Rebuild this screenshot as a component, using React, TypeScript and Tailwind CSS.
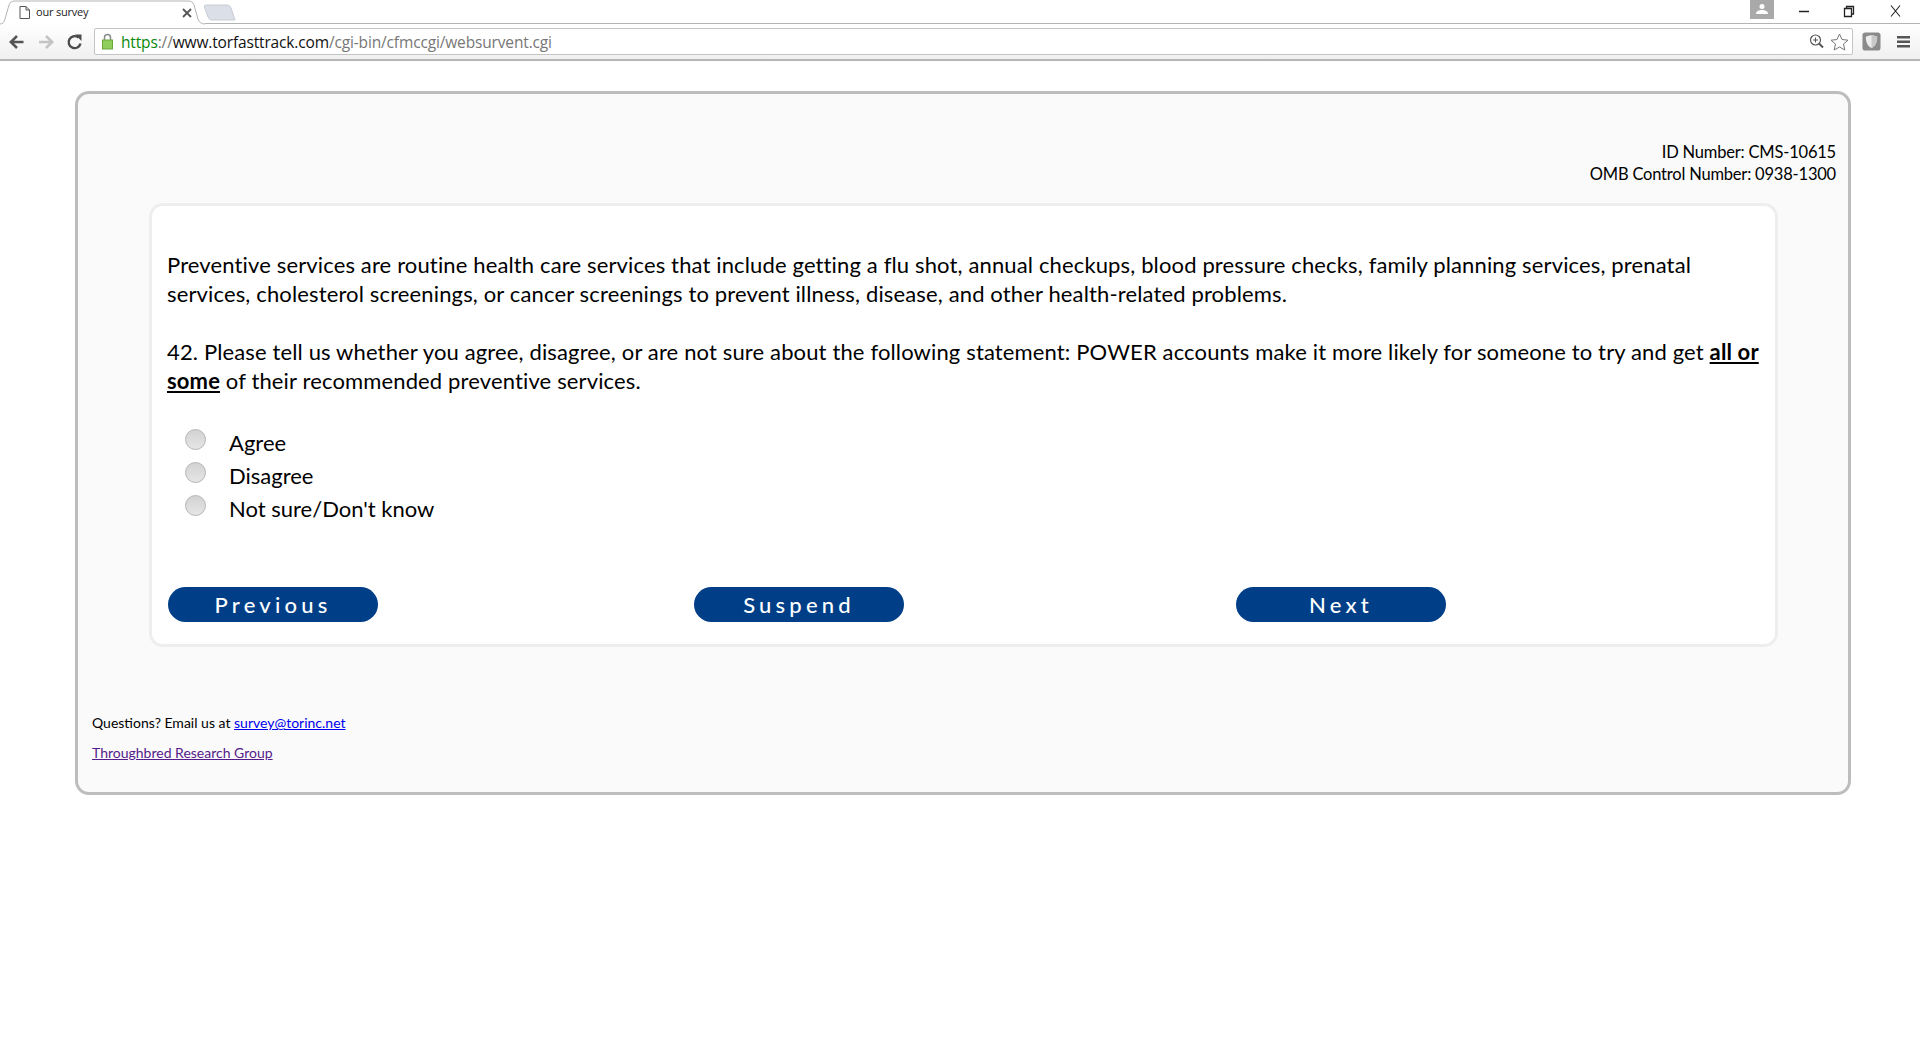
const bodyFont = "font-['Lato','Open_Sans',sans-serif]"

function TabShape() {
  return (
    <svg width="240" height="25" viewBox="0 0 240 25" className="absolute left-0 top-0" fill="none">
      <path d="M0 24 C3 24 4 22 5 19 L9 5 C10 2 12 1 15 1 L188 1 C191 1 193 2 194 5 L198 19 C199 22 201 24 205 24" fill="#ffffff" stroke="#b4b4b4" strokeWidth="1" />
      <path d="M204 6 C205 5 206 5 208 5 L227 5 C229 5 230 6 231 8 L235 20 L212 20 C210 20 209 19 208 17 Z" fill="#dbe0e8" stroke="#c8ccd2" strokeWidth="1" />
    </svg>
  )
}

function ChromeBar() {
  return (
    <div className="bg-white">
      <div className="relative flex h-[24px] items-center">
        <div className="absolute left-[205px] right-0 top-[23px] h-px bg-[#b4b4b4]" />
        <TabShape />
        <div className="relative ml-[19px] flex w-[172px] items-center">
          <svg width="11" height="13" viewBox="0 0 11 13" fill="none" stroke="#555" strokeWidth="1">
            <path d="M1 .5H7L10.500 4V12.500H1V.5Z" />
            <path d="M7 .5V4H10.500" />
          </svg>
          <span className="ml-[6px] font-['Open_Sans',sans-serif] text-[11px] tracking-[-0.2px] text-[#222]">our survey</span>
          <svg width="10" height="10" viewBox="0 0 10 10" className="absolute left-[163px] top-[4px]" stroke="#555" strokeWidth="1.800">
            <path d="M1 1L9 9M9 1L1 9" />
          </svg>
        </div>
        <div className="relative ml-auto flex h-full items-center">
          <div className="absolute left-[-49px] top-0 flex h-[19px] w-[24px] items-start justify-center bg-[#a9a9a9] pt-[4px]">
            <svg width="12" height="10" viewBox="0 0 12 10" fill="#fff">
              <circle cx="6" cy="2.500" r="2.500" />
              <path d="M0 10C0 7 3 6 6 6S12 7 12 10Z" />
            </svg>
          </div>
          <svg width="102" height="14" viewBox="0 0 102 14" fill="none" stroke="#222" className="mr-[19px] mt-[-3px]">
            <path d="M0 7.500H10" strokeWidth="1.500" />
            <path d="M45.500 4.500H52.500V12.500H45.500ZM47.500 4.500V2.500H54.500V10H52.500" strokeWidth="1.300" />
            <path d="M92 1.500L101 12.500M101 1.500L92 12.500" strokeWidth="1.100" />
          </svg>
        </div>
      </div>
      <div className="flex h-[37px] items-center border-b-2 border-[#b6b6b6] bg-gradient-to-b from-[#ffffff] to-[#f0f0f0]">
        <svg width="76" height="18" viewBox="0 0 76 18" fill="none" className="ml-[9px] shrink-0">
          <path d="M14.500 9H2M8 3L1.800 9L8 15" stroke="#555" strokeWidth="2.600" />
          <path d="M30 9H43M37 3L43.200 9L37 15" stroke="#c4c4c4" strokeWidth="2.600" />
          <path d="M69.500 4.500A6 6 0 1 0 71.500 10.500" stroke="#4b4b4b" strokeWidth="2.400" />
          <path d="M66 1.500L72.500 1.500L72.500 8Z" fill="#4b4b4b" />
        </svg>
        <div className="ml-[9px] flex h-[27px] w-[1759px] shrink-0 items-center rounded-[2px] border border-[#c4c4c4] bg-white pl-[6px] pr-[3px]">
          <svg width="13" height="17" viewBox="0 0 13 17" fill="none">
            <path d="M3.500 7V4.500A3 3 0 0 1 9.500 4.500V7" stroke="#8a8a8a" strokeWidth="1.500" />
            <rect x="1.500" y="7" width="10" height="9" fill="#8fce5a" stroke="#6aa53c" />
          </svg>
          <div className="ml-[7px] mt-[2px] font-['Open_Sans',sans-serif] text-[15.500px] tracking-[-0.150px] text-[#777]">
            <span className="text-[#0a8a0a]">https</span>
            <span>://</span>
            <span className="text-[#111]">www.torfasttrack.com</span>
            <span>/cgi-bin/cfmccgi/websurvent.cgi</span>
          </div>
          <svg width="40" height="18" viewBox="0 0 40 18" fill="none" className="ml-auto" stroke="#555">
            <circle cx="6.500" cy="7" r="5" strokeWidth="1.200" />
            <path d="M4 7H9M6.500 4.500V9.500" strokeWidth="1" />
            <path d="M10 10.500L14 14.500" strokeWidth="2" />
            <path d="M30.500 1L33 6.500L39 7.200L34.500 11L35.800 17L30.500 14L25.200 17L26.500 11L22 7.200L28 6.500Z" stroke="#777" />
          </svg>
        </div>
        <svg width="19" height="19" viewBox="0 0 20 20" className="ml-[9px] shrink-0">
          <rect x="0.500" y="0.500" width="19" height="19" rx="3" fill="#8b8b8b" />
          <path d="M4 5C7 4 10 3.500 10 3.500S13 4 16 5C16 11 14 15 10 17C6 15 4 11 4 5Z" fill="#ededed" />
          <path d="M10 3.500S13 4 16 5C16 11 14 15 10 17Z" fill="#c9c9c9" />
        </svg>
        <svg width="13" height="12" viewBox="0 0 13 12" fill="#555" className="ml-[16px] shrink-0">
          <rect width="13" height="2.500" y="0" />
          <rect width="13" height="2.500" y="4.500" />
          <rect width="13" height="2.500" y="9" />
        </svg>
      </div>
    </div>
  )
}

function RadioRow({ label }: { label: string }) {
  return (
    <label className="flex h-[33px] items-start">
      <input
        type="radio"
        name="q42"
        className="mt-[-1px] h-[21px] w-[21px] appearance-none rounded-full border border-[#b4b4b4] bg-gradient-to-b from-[#d2d2d2] to-[#e6e6e6]"
      />
      <span className="ml-[23px] mt-[-4px] text-[22px] leading-[33px] text-black">{label}</span>
    </label>
  )
}

function NavButton({ label, className }: { label: string; className: string }) {
  return (
    <button
      type="button"
      className={`flex h-[35px] w-[210px] items-center justify-center rounded-[18px] bg-[#003f87] text-[22px] font-medium tracking-[4.200px] text-white ${className}`}
    >
      {label}
    </button>
  )
}

export default function App() {
  return (
    <div className={`min-h-[1040px] bg-white ${bodyFont}`}>
      <ChromeBar />
      <div className="ml-[75px] mt-[30px] h-[704px] w-[1776px] rounded-[14px] border-[3px] border-[#bdbdbd] bg-[#fafafa] pl-[71px] pr-[12px] pt-[47px]">
        <div className="text-right text-[16.500px] leading-[22px] tracking-[-0.200px] text-black">
          <div>ID Number: CMS-10615</div>
          <div>OMB Control Number: 0938-1300</div>
        </div>
        <div className="mt-[18px] h-[444px] w-[1629px] rounded-[14px] border-[3px] border-[#eeeeee] bg-white pl-[15px] pt-[44px]">
          <p className="whitespace-nowrap text-[22px] leading-[29px] tracking-[0.140px] text-black">
            Preventive services are routine health care services that include getting a flu shot, annual checkups, blood pressure checks, family planning services, prenatal
            <br />
            services, cholesterol screenings, or cancer screenings to prevent illness, disease, and other health-related problems.
          </p>
          <p className="mt-[29px] whitespace-nowrap text-[22px] leading-[29px] tracking-[0.140px] text-black">
            42. Please tell us whether you agree, disagree, or are not sure about the following statement: POWER accounts make it more likely for someone to try and get{' '}
            <b className="underline">all or</b>
            <br />
            <b className="underline">some</b> of their recommended preventive services.
          </p>
          <div className="mt-[35px] flex flex-col pl-[18px]">
            <RadioRow label="Agree" />
            <RadioRow label="Disagree" />
            <RadioRow label="Not sure/Don't know" />
          </div>
          <div className="mt-[58px] flex">
            <NavButton label="Previous" className="ml-px" />
            <NavButton label="Suspend" className="ml-[316px]" />
            <NavButton label="Next" className="ml-[332px]" />
          </div>
        </div>
        <div className="ml-[-57px] mt-[66px] text-[14px] text-black">
          <div className="h-[29px] leading-[20px]">
            Questions? Email us at <a href="#" className="text-[#0000ee] underline">survey@torinc.net</a>
          </div>
          <a href="#" className="leading-[20px] text-[#551a8b] underline">Throughbred Research Group</a>
        </div>
      </div>
    </div>
  )
}
